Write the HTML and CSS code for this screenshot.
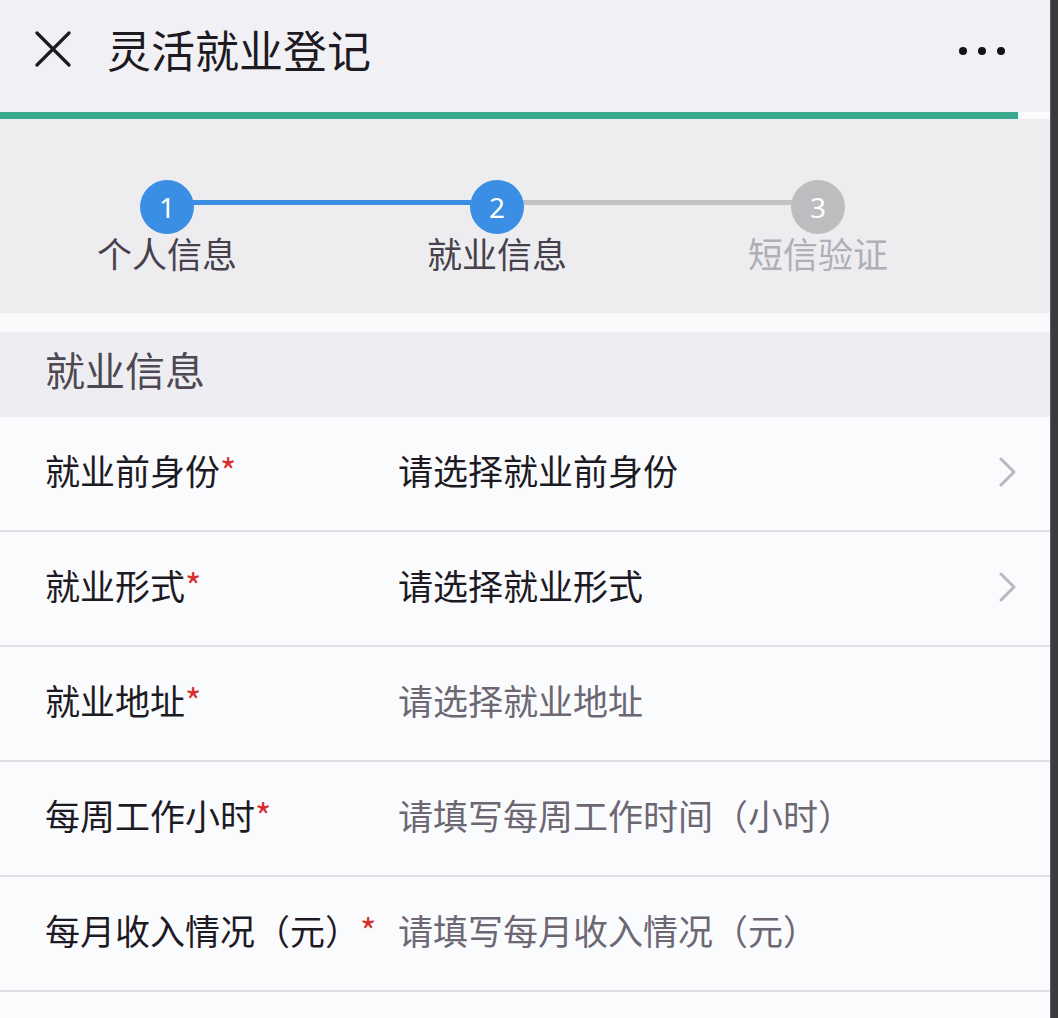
FILE: index.html
```html
<!DOCTYPE html>
<html lang="zh-CN">
<head>
    <meta charset="UTF-8">
    <meta name="viewport" content="width=device-width, initial-scale=1.0">
    <title>灵活就业登记</title>
    <link rel="stylesheet" href="styles.css">
</head>
<body>
    <div class="phone">
        <div class="screen">
            <header class="topbar">
                <svg class="icon-close" width="36" height="36" viewBox="0 0 36 36">
                    <path d="M2 2 L34 34 M34 2 L2 34" stroke="#1b1a1f" stroke-width="3.2" stroke-linecap="round" fill="none"/>
                </svg>
                <h1 class="title">灵活就业登记</h1>
                <div class="more">
                    <span></span><span></span><span></span>
                </div>
            </header>
            <div class="progress"></div>

            <!-- step indicator -->
            <ol class="steps">
                <li class="step done">
                    <span class="step-num">1</span>
                    <span class="step-label">个人信息</span>
                </li>
                <li class="step done">
                    <span class="step-num">2</span>
                    <span class="step-label">就业信息</span>
                </li>
                <li class="step">
                    <span class="step-num">3</span>
                    <span class="step-label">短信验证</span>
                </li>
            </ol>

            <div class="spacer"></div>

            <h2 class="section-title">就业信息</h2>

            <ul class="form">
                <li class="field">
                    <span class="field-label">就业前身份<i class="req">*</i></span>
                    <span class="field-value is-set">请选择就业前身份</span>
                    <svg class="chevron" width="18" height="30" viewBox="0 0 18 30">
                        <path d="M2 2 L15 15 L2 28" stroke="#b9b9bd" stroke-width="3" fill="none" stroke-linecap="round" stroke-linejoin="round"/>
                    </svg>
                </li>
                <li class="field">
                    <span class="field-label">就业形式<i class="req">*</i></span>
                    <span class="field-value is-set">请选择就业形式</span>
                    <svg class="chevron" width="18" height="30" viewBox="0 0 18 30">
                        <path d="M2 2 L15 15 L2 28" stroke="#b9b9bd" stroke-width="3" fill="none" stroke-linecap="round" stroke-linejoin="round"/>
                    </svg>
                </li>
                <li class="field">
                    <span class="field-label">就业地址<i class="req">*</i></span>
                    <span class="field-value">请选择就业地址</span>
                </li>
                <li class="field">
                    <span class="field-label">每周工作小时<i class="req">*</i></span>
                    <span class="field-value">请填写每周工作时间（小时）</span>
                </li>
                <li class="field">
                    <span class="field-label">每月收入情况（元）<i class="req">*</i></span>
                    <span class="field-value">请填写每月收入情况（元）</span>
                </li>
            </ul>
        </div>
        <div class="edge"></div>
    </div>
</body>
</html>
```

FILE: styles.css
```css
* {
    margin: 0;
    padding: 0;
    box-sizing: border-box;
}

body {
    font-family: "Noto Sans CJK SC", "Noto Sans", sans-serif;
    background-color: #fafbfd;
    height: 1018px;
    overflow: hidden;
}

.phone {
    display: flex;
    height: 100%;
}

.screen {
    flex: 1;
    display: flex;
    flex-direction: column;
    background-color: #fafbfd;
}

.edge {
    width: 8px;
    flex: none;
    background-color: #3b3b3d;
    border-left: 1px solid #5c5c60;
}

/* top bar */
.topbar {
    height: 112px;
    display: flex;
    align-items: center;
    padding: 0 0 14px 35px;
    background-color: #f1f1f5;
}

.icon-close {
    flex: none;
}

.title {
    margin-left: 36px;
    font-size: 44px;
    font-weight: 400;
    line-height: 1;
    color: #1d1a22;
}

.more {
    margin: 4px 45px 0 auto;
    display: flex;
    gap: 11px;
}

.more span {
    width: 8px;
    height: 8px;
    border-radius: 50%;
    background-color: #141218;
}

.progress {
    height: 7px;
    margin-right: 32px;
    background-color: #3aa98e;
    box-shadow: 0 2px 2px #d6f4e7;
}

/* steps */
.steps {
    list-style: none;
    height: 194px;
    display: grid;
    grid-template-columns: 326px 334px 308px;
    padding: 61px 4px 0;
    background-color: #ededf0;
}

.step {
    position: relative;
    display: flex;
    flex-direction: column;
    align-items: center;
}

.step + .step::before {
    content: "";
    position: absolute;
    top: 20px;
    right: 50%;
    width: 330px;
    height: 5px;
    background-color: #c3c3c6;
}

.step:nth-child(3)::before {
    width: 321px;
}

.step.done + .step.done::before {
    background-color: #3a8fe2;
}

.step-num {
    position: relative;
    z-index: 1;
    width: 54px;
    height: 54px;
    border-radius: 50%;
    display: flex;
    align-items: center;
    justify-content: center;
    font-family: "Noto Sans", sans-serif;
    font-size: 28px;
    color: #fff;
    background-color: #bdbdc0;
}

.step.done .step-num {
    background-color: #3a8fe4;
}

.step-label {
    font-size: 35px;
    line-height: 38px;
    color: #b1aeb5;
}

.step.done .step-label {
    color: #46414c;
}

.spacer {
    height: 19px;
    background-color: #f9fafc;
}

.section-title {
    height: 85px;
    display: flex;
    align-items: center;
    padding: 0 0 12px 45px;
    font-size: 40px;
    font-weight: 400;
    color: #4d4853;
    background-color: #eeeef2;
}

/* form rows */
.form {
    list-style: none;
}

.field {
    height: 115px;
    display: flex;
    align-items: center;
    padding: 0 33px 8px 45px;
    border-bottom: 2px solid #dfe0e4;
    font-size: 35px;
}

.field-label {
    width: 353px;
    flex: none;
    color: #1e1a23;
    white-space: nowrap;
}

.req {
    font-style: normal;
    color: #d8302e;
}

.field-value {
    flex: 1;
    color: #6d6773;
}

.field-value.is-set {
    color: #1e1a23;
}

.chevron {
    flex: none;
    margin-top: 4px;
}
```
